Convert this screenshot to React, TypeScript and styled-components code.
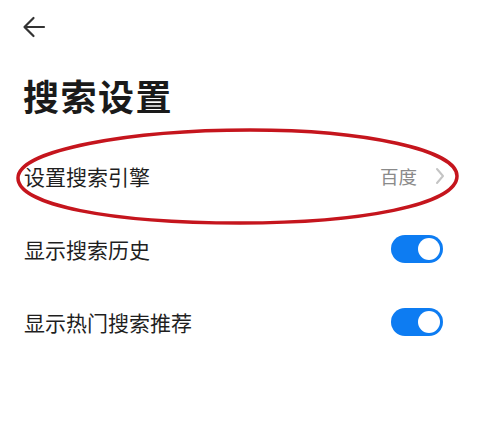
import React from "react";
import styled, { createGlobalStyle } from "styled-components";

const Global = createGlobalStyle`
  html, body { margin: 0; padding: 0; background: #fff; }
  body { font-family: "Noto Sans CJK SC", "Noto Sans", sans-serif; }
`;

const Page = styled.div`
  width: 485px;
  height: 437px;
  background: #fff;
  position: relative;
  overflow: hidden;
`;

const TopBar = styled.div`
  height: 54px;
  display: flex;
  align-items: center;
  padding-left: 22px;
`;

const Title = styled.h1`
  margin: 17px 0 0 23px;
  font-size: 36px;
  font-weight: 700;
  color: #1a1a1a;
  line-height: 48px;
  letter-spacing: 1.5px;
`;

const List = styled.div`
  margin-top: 20px;
  display: flex;
  flex-direction: column;
`;

const Row = styled.div`
  height: 73px;
  display: flex;
  align-items: center;
  justify-content: space-between;
  padding: 0 42px 0 24px;
`;

const Label = styled.span`
  font-size: 21px;
  color: #1f1f1f;
`;

const Right = styled.div`
  display: flex;
  align-items: center;
  gap: 18px;
  margin-right: -2px;
`;

const Value = styled.span`
  font-size: 18.5px;
  color: #8a8a8a;
`;

const Toggle = styled.div<{ on: boolean }>`
  width: 52px;
  height: 28px;
  border-radius: 14px;
  background: ${(p) => (p.on ? "#0d7cf2" : "#ccc")};
  position: relative;
`;

const Knob = styled.div`
  position: absolute;
  top: 3px;
  right: 3px;
  width: 22px;
  height: 22px;
  border-radius: 50%;
  background: #fff;
`;

const Ellipse = styled.svg`
  position: absolute;
  left: 0;
  top: 0;
  pointer-events: none;
`;

export default function App() {
  return (
    <>
      <Global />
      <Page>
        <TopBar>
          <svg width="24" height="22" viewBox="0 0 24 22" fill="none">
            <path d="M22 11H3M11.5 2L2.5 11l9 9" stroke="#333" strokeWidth="2.2" strokeLinecap="round" strokeLinejoin="round" />
          </svg>
        </TopBar>
        <Title>搜索设置</Title>
        <List>
          <Row>
            <Label>设置搜索引擎</Label>
            <Right>
              <Value>百度</Value>
              <svg width="10" height="18" viewBox="0 0 10 18" fill="none">
                <path d="M2 2l6 7-6 7" stroke="#c4c4c4" strokeWidth="2" strokeLinecap="round" strokeLinejoin="round" />
              </svg>
            </Right>
          </Row>
          <Row>
            <Label>显示搜索历史</Label>
            <Toggle on><Knob /></Toggle>
          </Row>
          <Row>
            <Label>显示热门搜索推荐</Label>
            <Toggle on><Knob /></Toggle>
          </Row>
        </List>
        <Ellipse width="485" height="437" viewBox="0 0 485 437">
          <path
            d="M250 130 C 365 130, 457 150, 457 176 C 457 205, 360 223, 240 223 C 110 223, 18 205, 18 178 C 18 150, 130 130, 250 130 Z"
            stroke="#c5151d"
            strokeWidth="3.5"
            fill="none"
          />
        </Ellipse>
      </Page>
    </>
  );
}
